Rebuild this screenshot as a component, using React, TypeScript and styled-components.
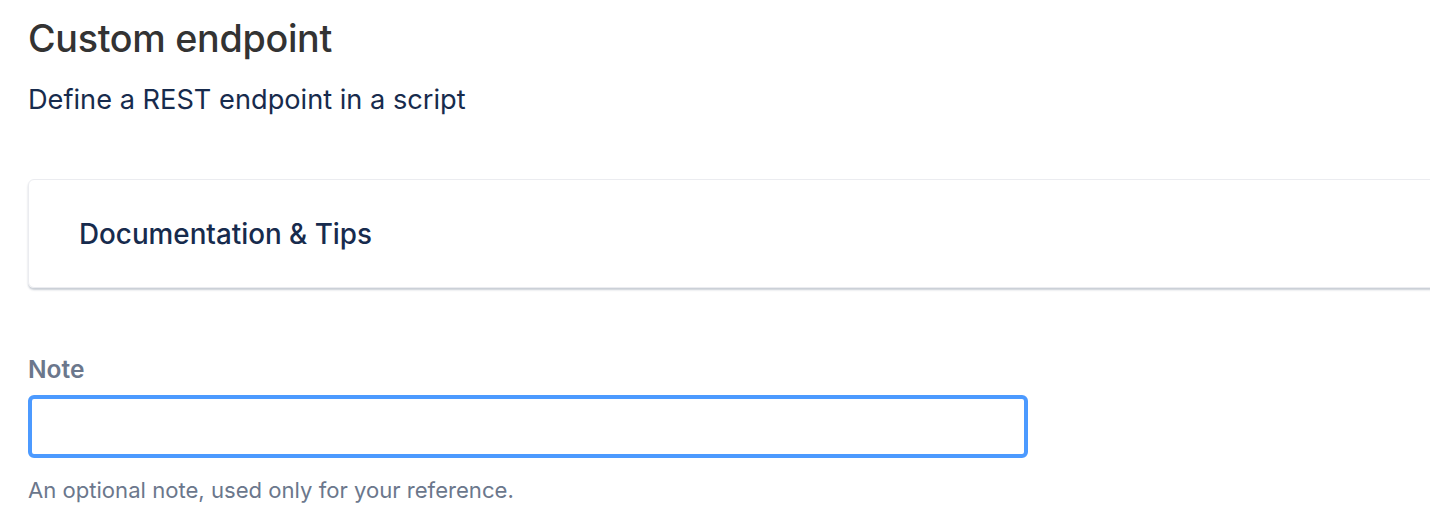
import React from "react";
import styled, { createGlobalStyle } from "styled-components";

const Global = createGlobalStyle`
  html, body { margin: 0; padding: 0; background: #ffffff; }
  body { font-family: Inter, "Liberation Sans", Arial, sans-serif; }
  * { box-sizing: border-box; }
`;

const Page = styled.div`
  padding: 14px 0 0 28px;
  width: 1430px;
  height: 514px;
  overflow: hidden;
`;

const Title = styled.h1`
  margin: 0;
  font-size: 37.7px;
  line-height: 48px;
  font-weight: 500;
  letter-spacing: -0.3px;
  color: #333333;
`;

const Subtitle = styled.p`
  margin: 22px 0 0;
  font-size: 27.2px;
  line-height: 32px;
  color: #172b4d;
`;

const Card = styled.section`
  margin-top: 63px;
  width: 1420px;
  height: 109px;
  border: 1px solid #ebecf0;
  border-radius: 6px;
  box-shadow: 0 2px 2px rgba(9, 30, 66, 0.22);
  display: flex;
  align-items: center;
  padding-left: 50px;
`;

const CardTitle = styled.h2`
  margin: 0;
  font-size: 27.8px;
  font-weight: 500;
  color: #172b4d;
`;

const Field = styled.div`
  margin-top: 67px;
  display: flex;
  flex-direction: column;
  width: 1000px;
`;

const Label = styled.label`
  font-size: 24.5px;
  line-height: 28px;
  font-weight: 600;
  color: #6b778c;
`;

const Input = styled.input`
  margin-top: 12px;
  width: 1000px;
  height: 63px;
  border: 4px solid #4c9aff;
  border-radius: 6px;
  outline: none;
  background: #ffffff;
  font-size: 28px;
  padding: 0 16px;
`;

const Help = styled.div`
  margin-top: 18px;
  font-size: 22.1px;
  line-height: 28px;
  color: #6b778c;
`;

export default function App() {
  return (
    <Page>
      <Global />
      <Title>Custom endpoint</Title>
      <Subtitle>Define a REST endpoint in a script</Subtitle>
      <Card>
        <CardTitle>Documentation &amp; Tips</CardTitle>
      </Card>
      <Field>
        <Label htmlFor="note">Note</Label>
        <Input id="note" type="text" />
        <Help>An optional note, used only for your reference.</Help>
      </Field>
    </Page>
  );
}
